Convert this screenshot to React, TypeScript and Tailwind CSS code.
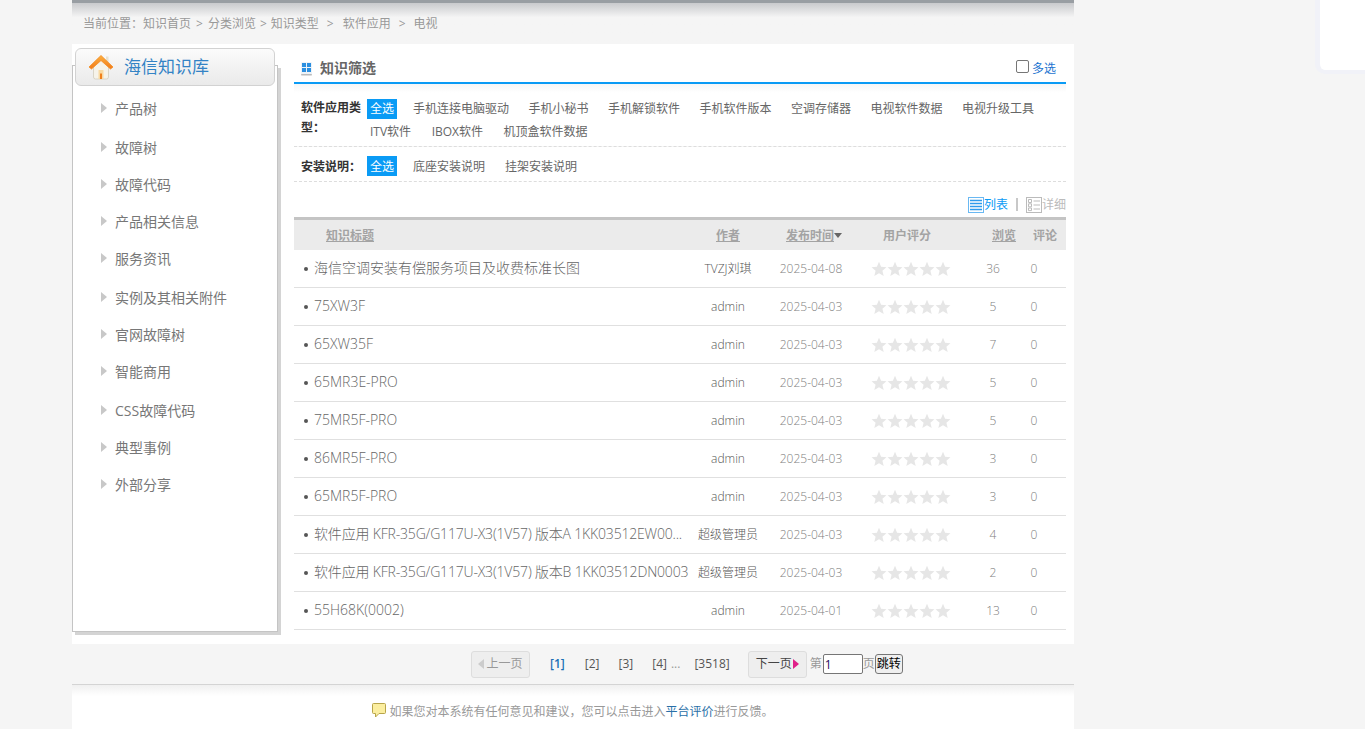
import React from "react";

const FONT = "font-['Open_Sans','Noto_Sans_CJK_SC',sans-serif]";

const sideItems = [
  { name: "产品树", cls: "h-[40px] pt-[1px]" },
  { name: "故障树", cls: "h-[38px]" },
  { name: "故障代码", cls: "h-[37px]" },
  { name: "产品相关信息", cls: "h-[37px]" },
  { name: "服务资讯", cls: "h-[37px]" },
  { name: "实例及其相关附件", cls: "h-[38px] pt-[3px]" },
  { name: "官网故障树", cls: "h-[37px] pt-[2px]" },
  { name: "智能商用", cls: "h-[39px]" },
  { name: "CSS故障代码", cls: "h-[38px]" },
  { name: "典型事例", cls: "h-[37px]" },
  { name: "外部分享", cls: "h-[37px]" },
];

const rows = [
  { title: "海信空调安装有偿服务项目及收费标准长图", author: "TVZJ刘琪", date: "2025-04-08", views: "36" },
  { title: "75XW3F", author: "admin", date: "2025-04-03", views: "5" },
  { title: "65XW35F", author: "admin", date: "2025-04-03", views: "7" },
  { title: "65MR3E-PRO", author: "admin", date: "2025-04-03", views: "5" },
  { title: "75MR5F-PRO", author: "admin", date: "2025-04-03", views: "5" },
  { title: "86MR5F-PRO", author: "admin", date: "2025-04-03", views: "3" },
  { title: "65MR5F-PRO", author: "admin", date: "2025-04-03", views: "3" },
  { title: "软件应用 KFR-35G/G117U-X3(1V57) 版本A 1KK03512EW00...", author: "超级管理员", date: "2025-04-03", views: "4", long: true },
  { title: "软件应用 KFR-35G/G117U-X3(1V57) 版本B 1KK03512DN0003", author: "超级管理员", date: "2025-04-03", views: "2", long: true },
  { title: "55H68K(0002)", author: "admin", date: "2025-04-01", views: "13" },
];

const HouseIcon = () => (
  <svg width="26" height="26" viewBox="0 0 26 26">
    <defs>
      <linearGradient id="roof" x1="0" y1="0" x2="0" y2="1">
        <stop offset="0" stopColor="#fbb040" />
        <stop offset="1" stopColor="#f27a1a" />
      </linearGradient>
    </defs>
    <path d="M5.5 12 L5.5 23 Q5.5 25 7.5 25 L18.5 25 Q20.5 25 20.5 23 L20.5 12 L13 5Z" fill="#f6f3ea" stroke="#cfc9b8" strokeWidth="0.7" />
    <rect x="18" y="2.5" width="2.5" height="6" fill="#e8e2d2" />
    <path d="M1 13 L13 1.5 L25 13 L22.5 15 L13 6.5 L3.5 15Z" fill="url(#roof)" stroke="#f28a1e" strokeWidth="0.8" strokeLinejoin="round" />
    <rect x="10.5" y="16" width="5" height="9" rx="0.5" fill="#f9d9a0" />
    <rect x="12" y="19.5" width="2" height="5.5" fill="#f0811c" />
  </svg>
);

const Star = () => (
  <svg width="16" height="16" viewBox="0 0 16 16">
    <path d="M8 0.8 L10.1 5.8 L15.5 6.2 L11.4 9.7 L12.7 15 L8 12.2 L3.3 15 L4.6 9.7 L0.5 6.2 L5.9 5.8Z" fill="#e6e6e6" />
  </svg>
);

const Tag = ({ children }: { children: React.ReactNode }) => (
  <span className="whitespace-nowrap text-[12px] leading-[20px] text-[#666]">{children}</span>
);

const AllTag = () => (
  <span className="flex h-[20px] w-[30px] shrink-0 items-center justify-center bg-[#0a9bf5] pt-[1px] text-[12px] text-white">全选</span>
);

const Sidebar = () => (
  <aside className="relative h-[584px] w-[206px] shrink-0">
    <div className="absolute inset-x-0 bottom-0 top-[17px] border border-[#c4c4c4] bg-white shadow-[3px_3px_0_#d4d4d4]" />
    <div className="relative mx-[3px] flex h-[38px] items-center gap-[10px] rounded-[6px] border border-[#d2d2d2] bg-gradient-to-b from-[#fbfbfb] to-[#eaeaea] pl-[12px]">
      <HouseIcon />
      <span className="text-[17px] text-[#3383c5]">海信知识库</span>
    </div>
    <ul className="relative pl-[29px] pt-[2px]">
      {sideItems.map((item) => (
        <li key={item.name} className={`flex items-center gap-[8px] ${item.cls}`}>
          <span className="-mt-[1px] h-0 w-0 border-y-[5px] border-l-[6px] border-y-transparent border-l-[#c8c8c8]" />
          <span className="text-[14px] text-[#777]">{item.name}</span>
        </li>
      ))}
    </ul>
  </aside>
);

const Filters = () => (
  <div>
    <div className="flex h-[40px] items-center justify-between border-b-[2px] border-[#0a9bf5] pl-[7px] pr-[10px] pt-[10px]">
      <div className="flex items-center gap-[8px]">
        <span className="grid h-[13px] w-[11px] grid-cols-2 content-center gap-[1px] rounded-[1px] border-b border-[#bbb] bg-[#eef3f8] p-[1px] shadow-[0_1px_0_#ddd]">
          <i className="h-[4px] bg-[#2b8fe0]" /><i className="h-[4px] bg-[#2b8fe0]" /><i className="h-[4px] bg-[#2b8fe0]" /><i className="h-[4px] bg-[#2b8fe0]" />
        </span>
        <span className="text-[14px] font-bold leading-[18px] text-[#666]">知识筛选</span>
      </div>
      <label className="flex items-center gap-[3px] text-[12px] text-[#1a73d0]">
        <input type="checkbox" className="-mt-[4px] h-[13px] w-[13px] appearance-none rounded-[2px] border border-[#767676] bg-white" />
        <span className="pt-[1px]">多选</span>
      </label>
    </div>
    <div className="flex h-[63px] border-b border-dashed border-[#ddd] bg-gradient-to-b from-[#f6f6f6] to-white to-[14%] pl-[7px] pt-[14px]">
      <div className="w-[66px] shrink-0 pr-[1px] text-[12px] font-bold leading-[20px] text-[#333]">软件应用类型：</div>
      <div>
        <div className="flex items-center">
          <AllTag />
          <div className="ml-[16px] flex gap-[19.5px] pt-[1px]">
            <Tag>手机连接电脑驱动</Tag><Tag>手机小秘书</Tag><Tag>手机解锁软件</Tag><Tag>手机软件版本</Tag><Tag>空调存储器</Tag><Tag>电视软件数据</Tag><Tag>电视升级工具</Tag>
          </div>
        </div>
        <div className="ml-[3px] mt-[3px] flex gap-[20.5px]">
          <Tag>ITV软件</Tag><Tag>IBOX软件</Tag><Tag>机顶盒软件数据</Tag>
        </div>
      </div>
    </div>
    <div className="flex h-[35px] items-center border-b border-dashed border-[#ddd] pl-[7px] pt-[4px]">
      <div className="w-[66px] shrink-0 pt-[1px] text-[12px] font-bold text-[#333]">安装说明：</div>
      <AllTag />
      <div className="ml-[16px] flex gap-[20px] pt-[1px]">
        <Tag>底座安装说明</Tag><Tag>挂架安装说明</Tag>
      </div>
    </div>
  </div>
);

const ViewSwitch = () => (
  <div className="flex h-[35px] items-center justify-end pt-[10px] text-[12px]">
    <svg width="16" height="16" viewBox="0 0 16 16">
      <rect x="0.5" y="0.5" width="15" height="15" fill="#fff" stroke="#69b8f2" />
      <path d="M2 3.5H14M2 6.5H14M2 9.5H14M2 12.5H14" stroke="#2d9bec" strokeWidth="1.6" />
    </svg>
    <span className="text-[#0a9bf5]">列表</span>
    <span className="mx-[8px] h-[13px] w-[2px] bg-[#c8c8c8]" />
    <svg width="16" height="16" viewBox="0 0 16 16">
      <rect x="0.5" y="0.5" width="15" height="15" fill="#fff" stroke="#bbb" />
      <path d="M2.5 2.5h3v3h-3zM2.5 6.8h3v3h-3zM2.5 11h3v2.6h-3z" fill="none" stroke="#bbb" />
      <path d="M7.5 4H14M7.5 8H14M7.5 12H14" stroke="#bbb" strokeWidth="1.2" />
    </svg>
    <span className="text-[#bbb]">详细</span>
  </div>
);

const KnowledgeTable = () => (
  <div>
    <div className="flex h-[33px] items-center border-t-[3px] border-[#c4c4c4] bg-[#ebebeb] pt-[1px] text-[12px] font-bold text-[#a3a3a3]">
      <span className="w-[394px] pl-[32px] underline">知识标题</span>
      <span className="w-[80px] text-center underline">作者</span>
      <span className="flex w-[86px] items-center justify-center pl-[6px]">
        <span className="underline">发布时间</span>
        <span className="h-0 w-0 border-x-[4.5px] border-t-[5px] border-x-transparent border-t-[#666]" />
      </span>
      <span className="w-[106px] text-center">用户评分</span>
      <span className="w-[56px] pl-[32px] underline">浏览</span>
      <span className="w-[41px] whitespace-nowrap pl-[17px]">评论</span>
    </div>
    {rows.map((row) => (
      <div key={row.title} className="flex h-[38px] items-center border-b border-[#e0e0e0] font-light">
        <div className="flex w-[394px] items-center pl-[10px]">
          <span className="mr-[6px] h-[4px] w-[4px] shrink-0 rounded-full bg-[#555]" />
          <span className={`-mt-[2px] whitespace-nowrap text-[14px] text-[#666] ${row.long ? "tracking-[-0.18px]" : ""}`}>{row.title}</span>
        </div>
        <span className="w-[80px] text-center text-[12px] text-[#555]">{row.author}</span>
        <span className="w-[86px] text-center text-[12px] text-[#808080]">{row.date}</span>
        <div className="flex w-[114px] pl-[17px]">
          {[0, 1, 2, 3, 4].map((i) => <Star key={i} />)}
        </div>
        <span className="w-[50px] text-center text-[12px] text-[#808080]">{row.views}</span>
        <span className="w-[32px] text-center text-[12px] text-[#808080]">0</span>
      </div>
    ))}
  </div>
);

const Pagination = () => (
  <div className="flex h-[41px] items-center border-b border-[#d4d4d4] pl-[399px] text-[12px] text-[#555]">
    <span className="flex h-[27px] w-[59px] items-center justify-center gap-[2px] rounded-[3px] border border-[#ddd] bg-[#eee] text-[#999]">
      <span className="h-0 w-0 border-y-[5px] border-r-[6px] border-y-transparent border-r-[#ccc]" />
      上一页
    </span>
    <span className="ml-[20px] font-semibold text-[#1a6fb5]">[1]</span>
    <span className="ml-[20px]">[2]</span>
    <span className="ml-[19px]">[3]</span>
    <span className="ml-[19px]">[4]</span>
    <span className="ml-[4px] text-[#999]">...</span>
    <span className="ml-[14px]">[3518]</span>
    <span className="ml-[18px] flex h-[27px] w-[59px] items-center justify-center gap-[1px] rounded-[3px] border border-[#ddd] bg-[#eee] text-[#444]">
      下一页
      <span className="h-0 w-0 border-y-[5px] border-l-[6px] border-y-transparent border-l-[#e0218a]" />
    </span>
    <span className="ml-[3px] text-[#999]">第</span>
    <input defaultValue="1" className="ml-[1px] h-[20px] w-[40px] rounded-[2px] border border-[#767676] bg-white px-[1px] text-[12px] text-[#2a0a5e] outline-none" />
    <span className="text-[#999]">页</span>
    <button className="h-[20px] w-[28px] rounded-[3px] border border-[#767676] bg-[#efefef] text-[12px] leading-none text-black">跳转</button>
  </div>
);

const App = () => (
  <div className={`relative h-[729px] overflow-hidden bg-[#f5f5f5] ${FONT}`}>
    {/* pale panel top right */}
    <div className="absolute right-0 top-[-4px] h-[78px] w-[50px] rounded-bl-[10px] border-b-[4px] border-l-[5px] border-[#f1f2f8] bg-white" />
    <div className="ml-[72px] w-[1002px]">
      <div className="flex h-[44px] border-t-[3px] border-[#999ea3] bg-gradient-to-b from-[#c9cacd] from-0% to-[#f5f5f5] to-[35%] pl-[11px] pt-[12px] text-[12px] text-[#999]">
        <span>当前位置：</span>
        <span>知识首页</span>
        <span className="mx-[5px]">&gt;</span>
        <span>分类浏览</span>
        <span className="mx-[4px]">&gt;</span>
        <span>知识类型</span>
        <span className="ml-[8px] mr-[9px]">&gt;</span>
        <span>软件应用</span>
        <span className="ml-[8px] mr-[8px]">&gt;</span>
        <span>电视</span>
      </div>
      <div className="flex h-[600px] bg-white">
        <div className="pt-[4px]"><Sidebar /></div>
        <main className="ml-[16px] w-[772px]">
          <Filters />
          <ViewSwitch />
          <KnowledgeTable />
        </main>
      </div>
      <Pagination />
      <div className="flex h-[44px] items-center justify-center bg-white bg-gradient-to-b from-[#f0f0f0] to-[#ffffff] to-[25%] pt-[9px] text-[12px] text-[#999]">
        <svg width="14" height="15" viewBox="0 0 14 15" className="-mt-[3px] mr-[3px]">
          <path d="M1.5 0.5H12.5Q13.5 0.5 13.5 1.5V9.5Q13.5 10.5 12.5 10.5H7L3.5 14V10.5H1.5Q0.5 10.5 0.5 9.5V1.5Q0.5 0.5 1.5 0.5Z" fill="#fbeea0" stroke="#b8a54a" />
        </svg>
        如果您对本系统有任何意见和建议，您可以点击进入<span className="text-[#2a6fa8]">平台评价</span>进行反馈。
      </div>
    </div>
  </div>
);

export default App;
